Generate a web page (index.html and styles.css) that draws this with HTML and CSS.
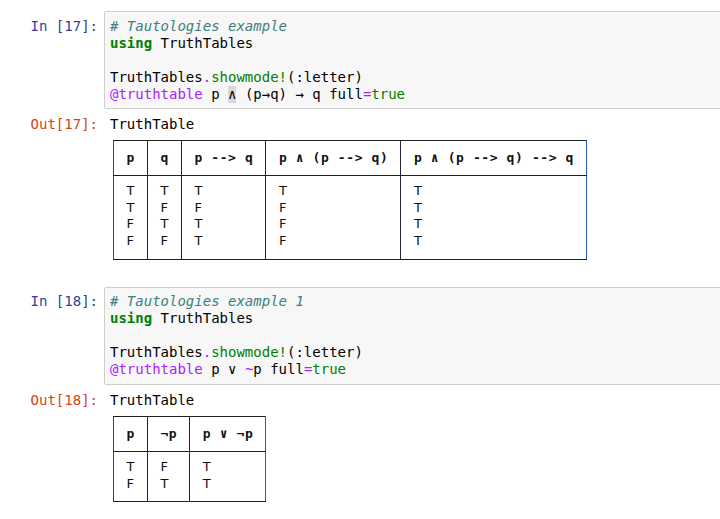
FILE: index.html
```html
<!DOCTYPE html>
<html>
<head>
<meta charset="utf-8">
<link rel="stylesheet" href="styles.css">
</head>
<body>
<div class="nb">
  <div class="cell">
    <div class="row">
      <div class="prompt in-p">In&nbsp;[17]:</div>
      <div class="input"><pre class="code"><span class="cm-comment"># Tautologies example</span>
<span class="cm-keyword">using</span> TruthTables

TruthTables<span class="cm-op">.</span><span class="cm-builtin">showmode!</span>(:letter)
<span class="cm-meta">@truthtable</span> p <span class="sel">∧</span> (p→q) → q full<span class="cm-op">=</span><span class="cm-builtin">true</span></pre></div>
    </div>
    <div class="row out">
      <div class="prompt out-p">Out[17]:</div>
      <div class="output">
        <div class="otext">TruthTable</div>
        <table class="tt">
          <thead>
            <tr><th>p</th><th>q</th><th>p --&gt; q</th><th>p ∧ (p --&gt; q)</th><th>p ∧ (p --&gt; q) --&gt; q</th></tr>
          </thead>
          <tbody>
            <tr>
              <td>T<br>T<br>F<br>F</td>
              <td>T<br>F<br>T<br>F</td>
              <td>T<br>F<br>T<br>T</td>
              <td>T<br>F<br>F<br>F</td>
              <td>T<br>T<br>T<br>T</td>
            </tr>
          </tbody>
        </table>
      </div>
    </div>
  </div>

  <div class="cell second">
    <div class="row">
      <div class="prompt in-p">In&nbsp;[18]:</div>
      <div class="input"><pre class="code"><span class="cm-comment"># Tautologies example 1</span>
<span class="cm-keyword">using</span> TruthTables

TruthTables<span class="cm-op">.</span><span class="cm-builtin">showmode!</span>(:letter)
<span class="cm-meta">@truthtable</span> p ∨ <span class="cm-op">~</span>p full<span class="cm-op">=</span><span class="cm-builtin">true</span></pre></div>
    </div>
    <div class="row out">
      <div class="prompt out-p">Out[18]:</div>
      <div class="output">
        <div class="otext">TruthTable</div>
        <table class="tt">
          <thead>
            <tr><th>p</th><th>¬p</th><th>p ∨ ¬p</th></tr>
          </thead>
          <tbody>
            <tr>
              <td>T<br>F</td>
              <td>F<br>T</td>
              <td>T<br>T</td>
            </tr>
          </tbody>
        </table>
      </div>
    </div>
  </div>
</div>
</body>
</html>
```

FILE: styles.css
```css
html, body {
  margin: 0;
  padding: 0;
  background: #ffffff;
  overflow: hidden;
}

.nb {
  padding-top: 11px;
  width: 760px;
  font-family: "DejaVu Sans Mono", "Liberation Mono", monospace;
  font-size: 14px;
  color: #000000;
}

.cell.second {
  margin-top: 27px;
}

.row {
  display: flex;
  align-items: flex-start;
}

.row.out {
  margin-top: 7px;
}

.prompt {
  width: 104px;
  flex: none;
  box-sizing: border-box;
  text-align: right;
  padding-right: 6px;
  line-height: 17px;
  white-space: nowrap;
}

.in-p {
  color: #303F9F;
  padding-top: 6.5px;
}

.out-p {
  color: #D84315;
}

.input {
  flex: 1;
  background: #f7f7f7;
  border: 1px solid #cfcfcf;
  border-radius: 2px;
}

.code {
  margin: 0;
  padding: 5.5px 0 5.5px 5px;
  font-family: inherit;
  font-size: 14px;
  line-height: 17px;
}

.cm-comment { color: #408080; font-style: italic; }
.cm-keyword { color: #008000; font-weight: bold; }
.cm-builtin { color: #008000; }
.cm-op { color: #AA22FF; }
.cm-meta { color: #AA22FF; }
.sel { background: #d9d9d9; display: inline-block; line-height: 17px; }

.output {
  padding-left: 6px;
}

.otext {
  line-height: 17px;
}

.tt {
  margin-top: 7px;
  margin-left: 3px;
  border-collapse: collapse;
}

.tt th, .tt td {
  border: 1px solid #1f1f1f;
  border-left-color: #2a2140;
  border-right-color: #2a2140;
  text-align: left;
  vertical-align: top;
  white-space: pre;
}

.tt th:first-child, .tt td:first-child {
  border-left-color: #6a3d1a;
}

.tt th:last-child, .tt td:last-child {
  border-right-color: #1f5fbf;
}

.tt th {
  font-family: "DejaVu Sans Mono", monospace;
  font-weight: bold;
  font-size: 13px;
  letter-spacing: 0.6px;
  line-height: 16px;
  padding: 9px 12px 9px 12.5px;
  color: #111111;
}

.tt td {
  font-family: "DejaVu Sans", Verdana, sans-serif;
  font-size: 13px;
  line-height: 16.7px;
  padding: 7px 12px 9px 12.5px;
  color: #111111;
}
```
